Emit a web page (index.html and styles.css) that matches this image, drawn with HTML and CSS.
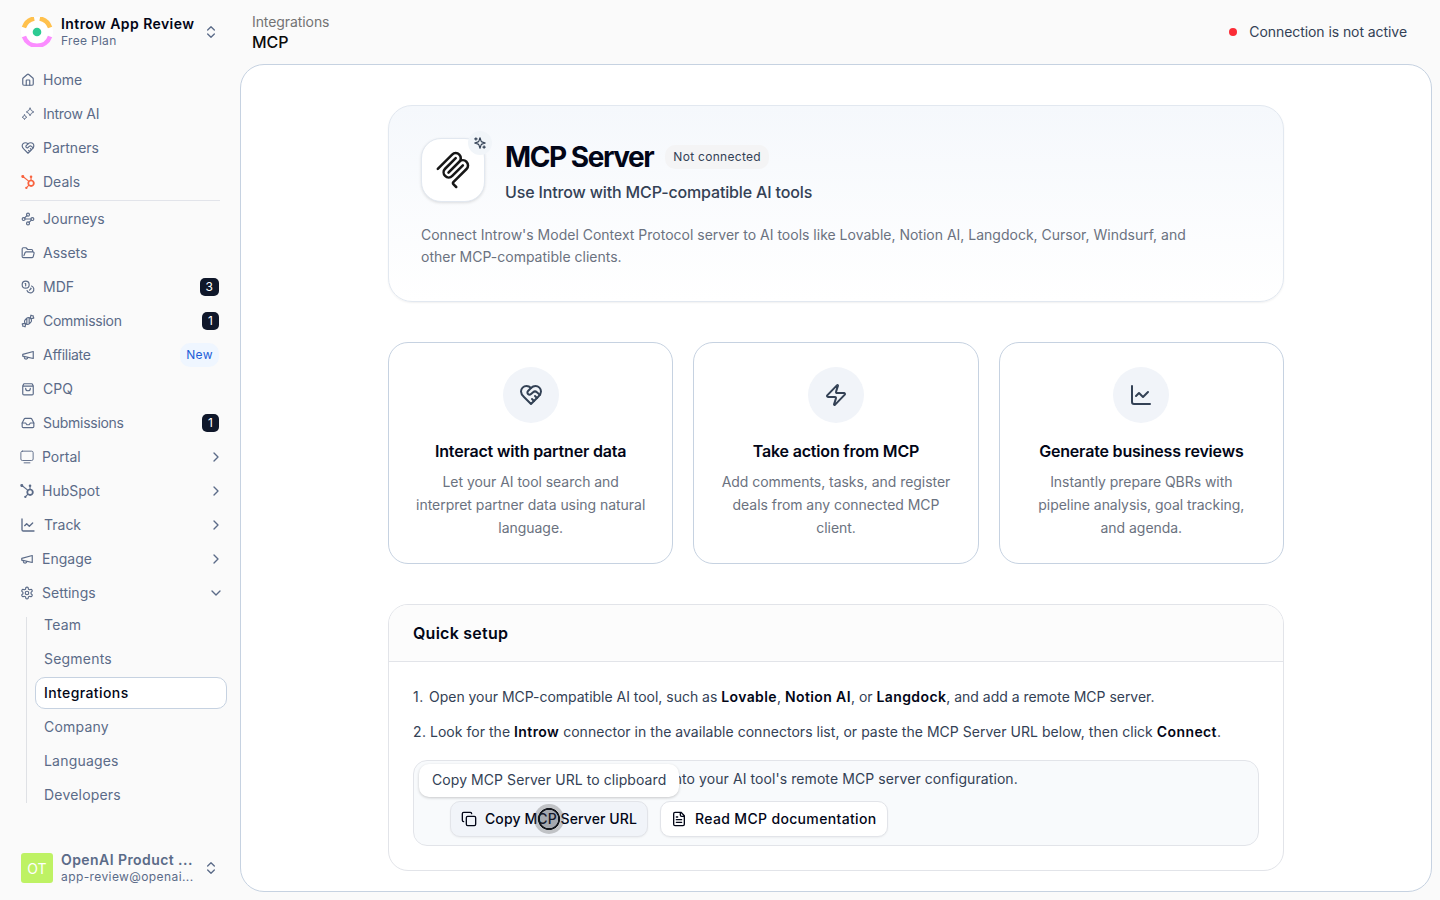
FILE: index.html
```html
<!DOCTYPE html>
<html lang="en">
<head>
    <meta charset="UTF-8">
    <title>MCP - Introw</title>
    <meta name="viewport" content="width=device-width, initial-scale=1.0">
    <link rel="stylesheet" href="styles.css">
</head>
<body>
    <svg class="sprite" aria-hidden="true">
        <symbol id="updown" viewBox="0 0 24 24"><path d="m7 15 5 5 5-5M7 9l5-5 5 5"/></symbol>
        <symbol id="chevron" viewBox="0 0 24 24"><path d="m9 18 6-6-6-6"/></symbol>
        <symbol id="home" viewBox="0 0 24 24"><path d="M15 21v-8a1 1 0 0 0-1-1h-4a1 1 0 0 0-1 1v8"/><path d="M3 10a2 2 0 0 1 .709-1.528l7-5.999a2 2 0 0 1 2.582 0l7 5.999A2 2 0 0 1 21 10v9a2 2 0 0 1-2 2H5a2 2 0 0 1-2-2z"/></symbol>
        <symbol id="ai" viewBox="0 0 24 24"><path d="M15.500 2q1 5 6.500 6.500-5.500 1.500-6.500 6.500-1-5-6.500-6.500 5.500-1.500 6.500-6.500ZM6 13.500q.8 3.200 4 4-3.200.8-4 4-.8-3.200-4-4 3.200-.8 4-4Z"/></symbol>
        <symbol id="handshake" viewBox="0 0 24 24"><path d="M19 14c1.490-1.460 3-3.210 3-5.500A5.500 5.500 0 0 0 16.500 3c-1.760 0-3 .5-4.500 2-1.500-1.500-2.740-2-4.500-2A5.500 5.500 0 0 0 2 8.500c0 2.300 1.500 4.050 3 5.500l7 7Z"/><path d="M12 5 9.040 7.960a2.170 2.170 0 0 0 0 3.080c.82.82 2.130.85 3 .07l2.070-1.900a2.820 2.820 0 0 1 3.790 0l2.960 2.660M18 15l-2-2M15 18l-2-2"/></symbol>
        <symbol id="hubspot" viewBox="0 0 24 24"><path fill="currentColor" stroke="none" d="M18.164 7.930V5.084a2.198 2.198 0 001.267-1.978v-.067A2.200 2.200 0 0017.238.845h-.067a2.200 2.200 0 00-2.193 2.193v.067a2.196 2.196 0 001.252 1.973l.013.006v2.852a6.220 6.220 0 00-2.969 1.310l.012-.01-7.828-6.095A2.497 2.497 0 104.300 4.656l-.012.006 7.697 5.991a6.176 6.176 0 00-1.038 3.446c0 1.343.425 2.588 1.147 3.607l-.013-.02-2.342 2.343a1.968 1.968 0 00-.58-.095h-.002a2.033 2.033 0 102.033 2.033 1.978 1.978 0 00-.1-.595l.005.014 2.317-2.317a6.247 6.247 0 104.782-11.134l-.036-.005zm-.964 9.378a3.206 3.206 0 113.215-3.207v.002a3.206 3.206 0 01-3.207 3.207z"/></symbol>
        <symbol id="journey" viewBox="0 0 24 24"><circle cx="12" cy="4.500" r="2.500"/><path d="m10.200 6.300-3.900 3.900"/><circle cx="4.500" cy="12" r="2.500"/><path d="M7 12h10"/><circle cx="19.500" cy="12" r="2.500"/><path d="m13.800 17.700 3.900-3.900"/><circle cx="12" cy="19.500" r="2.500"/></symbol>
        <symbol id="folder" viewBox="0 0 24 24"><path d="M2 7.500V18a2 2 0 0 0 2 2h15a2 2 0 0 0 2-1.600l1.400-6A2 2 0 0 0 20.500 10H9a2 2 0 0 0-1.900 1.300L5 16.500M2 8V5a2 2 0 0 1 2-2h4.500l3 3H18a2 2 0 0 1 2 2v2"/></symbol>
        <symbol id="coins" viewBox="0 0 24 24"><circle cx="8" cy="8" r="6"/><path d="M18.090 10.370A6 6 0 1 1 10.340 18M7 6h1v4M16.710 13.880l.7.710-2.820 2.820"/></symbol>
        <symbol id="candy" viewBox="0 0 24 24"><path d="m9.500 7.500-2 2a4.950 4.950 0 1 0 7 7l2-2a4.950 4.950 0 1 0-7-7ZM14 6.500v10M10 7.500v10"/><path d="m16 7 1-5 1.370.68A3 3 0 0 0 19.700 3H21v1.300c0 .46.100.92.320 1.330L22 7l-5 1M8 17l-1 5-1.370-.68A3 3 0 0 0 4.300 21H3v-1.300a3 3 0 0 0-.32-1.330L2 17l5-1"/></symbol>
        <symbol id="megaphone" viewBox="0 0 24 24"><path d="m3 11 18-5v12L3 14v-3zM11.600 16.800a3 3 0 1 1-5.800-1.600"/></symbol>
        <symbol id="bag" viewBox="0 0 24 24"><path d="M3 6.500 5 3h14l2 3.500V20a2 2 0 0 1-2 2H5a2 2 0 0 1-2-2ZM3 7h18M16 11a4 4 0 0 1-8 0"/></symbol>
        <symbol id="inbox" viewBox="0 0 24 24"><path d="M22 12h-6l-2 3h-4l-2-3H2"/><path d="M5.450 5.110 2 12v6a2 2 0 0 0 2 2h16a2 2 0 0 0 2-2v-6l-3.450-6.890A2 2 0 0 0 16.760 4H7.240a2 2 0 0 0-1.790 1.110z"/></symbol>
        <symbol id="monitor" viewBox="0 0 24 24"><rect x="1.500" y="2" width="21" height="16" rx="2.500"/><path d="M7 22h10"/></symbol>
        <symbol id="chart" viewBox="0 0 24 24"><path d="M3 3v16a2 2 0 0 0 2 2h16M19 9l-5 5-4-4-3 3"/></symbol>
        <symbol id="gear" viewBox="0 0 24 24"><path d="M12.220 2h-.44a2 2 0 0 0-2 2v.18a2 2 0 0 1-1 1.730l-.43.25a2 2 0 0 1-2 0l-.15-.08a2 2 0 0 0-2.730.73l-.22.38a2 2 0 0 0 .73 2.730l.15.100a2 2 0 0 1 1 1.720v.51a2 2 0 0 1-1 1.740l-.15.090a2 2 0 0 0-.73 2.730l.22.380a2 2 0 0 0 2.730.73l.15-.08a2 2 0 0 1 2 0l.43.250a2 2 0 0 1 1 1.730V20a2 2 0 0 0 2 2h.44a2 2 0 0 0 2-2v-.18a2 2 0 0 1 1-1.730l.43-.25a2 2 0 0 1 2 0l.15.080a2 2 0 0 0 2.730-.73l.22-.39a2 2 0 0 0-.73-2.730l-.15-.08a2 2 0 0 1-1-1.740v-.5a2 2 0 0 1 1-1.740l.15-.09a2 2 0 0 0 .73-2.730l-.22-.38a2 2 0 0 0-2.730-.73l-.15.080a2 2 0 0 1-2 0l-.43-.25a2 2 0 0 1-1-1.730V4a2 2 0 0 0-2-2z"/><circle cx="12" cy="12" r="3"/></symbol>
        <symbol id="sparkles" viewBox="0 0 24 24"><path d="m12 3-1.912 5.813a2 2 0 0 1-1.275 1.275L3 12l5.813 1.912a2 2 0 0 1 1.275 1.275L12 21l1.912-5.813a2 2 0 0 1 1.275-1.275L21 12l-5.813-1.912a2 2 0 0 1-1.275-1.275ZM5 3v4M19 17v4M3 5h4M17 19h4"/></symbol>
        <symbol id="mcp" viewBox="0 0 180 180"><path d="M18 84.853 85.882 16.971c9.373-9.373 24.569-9.373 33.941 0 9.373 9.372 9.373 24.568 0 33.941l-51.265 51.265M69.265 101.470l50.558-50.558c9.373-9.373 24.569-9.373 33.942 0l.353.353c9.373 9.373 9.373 24.569 0 33.941L92.725 146.600c-3.124 3.124-3.124 8.189 0 11.313l12.606 12.607M102.853 33.941 52.648 84.146c-9.372 9.372-9.372 24.568 0 33.941 9.373 9.372 24.569 9.372 33.941 0l50.205-50.205"/></symbol>
        <symbol id="zap" viewBox="0 0 24 24"><path d="M4 14a1 1 0 0 1-.78-1.630l9.900-10.200a.5.5 0 0 1 .86.460l-1.920 6.020A1 1 0 0 0 13 10h7a1 1 0 0 1 .78 1.630l-9.900 10.200a.5.5 0 0 1-.86-.46l1.920-6.020A1 1 0 0 0 11 14z"/></symbol>
        <symbol id="copy" viewBox="0 0 24 24"><rect x="8" y="8" width="14" height="14" rx="2"/><path d="M4 16c-1.100 0-2-.9-2-2V4c0-1.100.9-2 2-2h10c1.100 0 2 .9 2 2"/></symbol>
        <symbol id="file" viewBox="0 0 24 24"><path d="M15 2H6a2 2 0 0 0-2 2v16a2 2 0 0 0 2 2h12a2 2 0 0 0 2-2V7ZM14 2v4a2 2 0 0 0 2 2h4M10 9H8M16 13H8M16 17H8"/></symbol>
    </svg>

    <div class="layout">
        <aside class="sidebar">
            <div class="account workspace">
                <svg class="brand" viewBox="0 1 32 30">
                    <circle cx="16" cy="16" r="16" fill="#fff"/>
                    <g fill="none" stroke-width="4.500">
                        <path stroke="#ffc14d" d="M2.900 11.500A13.800 13.800 0 0 1 13.200 2.500M18.800 2.500A13.800 13.800 0 0 1 29.100 11.500"/>
                        <path stroke="#fb8dff" d="M2.950 20.500A13.800 13.800 0 0 0 29.050 20.500"/>
                    </g>
                    <circle cx="16" cy="16" r="4.300" fill="#2dcb93"/>
                </svg>
                <div class="account-text">
                    <div class="account-name">Introw App Review</div>
                    <div class="account-sub">Free Plan</div>
                </div>
                <svg class="icon updown"><use href="#updown"/></svg>
            </div>

            <nav class="nav">
                <a class="nav-item"><svg class="icon"><use href="#home"/></svg>Home</a>
                <a class="nav-item snug"><svg class="icon thin"><use href="#ai"/></svg>Introw AI</a>
                <a class="nav-item"><svg class="icon"><use href="#handshake"/></svg>Partners</a>
                <a class="nav-item"><svg class="icon orange"><use href="#hubspot"/></svg>Deals</a>
                <div class="divider"></div>
                <a class="nav-item"><svg class="icon"><use href="#journey"/></svg>Journeys</a>
                <a class="nav-item"><svg class="icon"><use href="#folder"/></svg>Assets</a>
                <a class="nav-item"><svg class="icon"><use href="#coins"/></svg>MDF<span class="count">3</span></a>
                <a class="nav-item snug"><svg class="icon"><use href="#candy"/></svg>Commission<span class="count">1</span></a>
                <a class="nav-item snug"><svg class="icon"><use href="#megaphone"/></svg>Affiliate<span class="new">New</span></a>
                <a class="nav-item"><svg class="icon"><use href="#bag"/></svg>CPQ</a>
                <a class="nav-item snug"><svg class="icon"><use href="#inbox"/></svg>Submissions<span class="count">1</span></a>
                <a class="nav-item group"><svg class="icon thin"><use href="#monitor"/></svg>Portal<svg class="icon arrow"><use href="#chevron"/></svg></a>
                <a class="nav-item group"><svg class="icon"><use href="#hubspot"/></svg>HubSpot<svg class="icon arrow"><use href="#chevron"/></svg></a>
                <a class="nav-item group"><svg class="icon wide"><use href="#chart"/></svg>Track<svg class="icon arrow"><use href="#chevron"/></svg></a>
                <a class="nav-item group"><svg class="icon"><use href="#megaphone"/></svg>Engage<svg class="icon arrow"><use href="#chevron"/></svg></a>
                <a class="nav-item group"><svg class="icon"><use href="#gear"/></svg>Settings<svg class="icon arrow open"><use href="#chevron"/></svg></a>
                <div class="subnav">
                    <a>Team</a>
                    <a>Segments</a>
                    <a class="active">Integrations</a>
                    <a>Company</a>
                    <a>Languages</a>
                    <a>Developers</a>
                </div>
            </nav>

            <div class="account user">
                <div class="avatar">OT</div>
                <div class="account-text">
                    <div class="account-name">OpenAI Product ...</div>
                    <div class="account-sub">app-review@openai...</div>
                </div>
                <svg class="icon updown"><use href="#updown"/></svg>
            </div>
        </aside>

        <main class="main">
            <header class="topbar">
                <div>
                    <div class="crumb">Integrations</div>
                    <div class="page-name">MCP</div>
                </div>
                <div class="status"><span class="dot"></span>Connection is not active</div>
            </header>

            <div class="panel">
                <section class="hero">
                    <div class="hero-top">
                        <div class="logo-box">
                            <svg class="mcp-logo"><use href="#mcp"/></svg>
                            <span class="logo-badge"><svg class="icon"><use href="#sparkles"/></svg></span>
                        </div>
                        <div>
                            <div class="title-row">
                                <h1>MCP Server</h1>
                                <span class="pill">Not connected</span>
                            </div>
                            <p class="subtitle">Use Introw with MCP-compatible AI tools</p>
                        </div>
                    </div>
                    <p class="description">Connect Introw's Model Context Protocol server to AI tools like Lovable, Notion AI, Langdock, Cursor, Windsurf, and other MCP-compatible clients.</p>
                </section>

                <section class="features">
                    <div class="feature">
                        <span class="feature-icon"><svg class="icon"><use href="#handshake"/></svg></span>
                        <h3>Interact with partner data</h3>
                        <p>Let your AI tool search and interpret partner data using natural language.</p>
                    </div>
                    <div class="feature">
                        <span class="feature-icon"><svg class="icon"><use href="#zap"/></svg></span>
                        <h3>Take action from MCP</h3>
                        <p>Add comments, tasks, and register deals from any connected MCP client.</p>
                    </div>
                    <div class="feature">
                        <span class="feature-icon"><svg class="icon"><use href="#chart"/></svg></span>
                        <h3>Generate business reviews</h3>
                        <p>Instantly prepare QBRs with pipeline analysis, goal tracking, and agenda.</p>
                    </div>
                </section>

                <section class="setup">
                    <h2>Quick setup</h2>
                    <div class="setup-body">
                        <p class="step"><span class="num">1.</span>Open your MCP-compatible AI tool, such as <b>Lovable</b>, <b>Notion AI</b>, or <b>Langdock</b>, and add a remote MCP server.</p>
                        <p class="step second"><span class="num">2.</span>Look for the <b>Introw</b> connector in the available connectors list, or paste the MCP Server URL below, then click <b>Connect</b>.</p>
                        <div class="callout">
                            <p>Then paste the MCP Server URL into your AI tool's remote MCP server configuration.</p>
                            <div class="actions">
                                <button class="btn copy hovered"><svg class="icon"><use href="#copy"/></svg>Copy MCP Server URL<span class="pointer"></span></button>
                                <button class="btn docs"><svg class="icon"><use href="#file"/></svg>Read MCP documentation</button>
                            </div>
                            <div class="tooltip">Copy MCP Server URL to clipboard</div>
                        </div>
                    </div>
                </section>
            </div>
        </main>
    </div>
</body>
</html>
```
FILE: styles.css
```css
* {
    margin: 0;
    padding: 0;
    box-sizing: border-box;
}

body {
    font-family: Inter, sans-serif;
    font-size: 14px;
    color: #334155;
    background-color: #fafafa;
    overflow: hidden;
}

.sprite {
    display: none;
}

.icon {
    width: 14px;
    height: 14px;
    flex-shrink: 0;
    fill: none;
    stroke: currentColor;
    stroke-width: 2;
    stroke-linecap: round;
    stroke-linejoin: round;
}

.thin {
    stroke-width: 1.6;
}

.layout {
    display: flex;
    height: 100vh;
}

/* sidebar */
.sidebar {
    width: 240px;
    display: flex;
    flex-direction: column;
    color: #5b6b88;
}

.account {
    height: 64px;
    display: flex;
    align-items: center;
    padding: 0 21px;
}

.account-text {
    width: 134px;
    margin: 0 8px 1px;
    white-space: nowrap;
}

.account-name {
    font-weight: 600;
    line-height: 18px;
    letter-spacing: 0.43px;
}

.workspace .account-name {
    color: #020617;
}

.account-sub {
    font-size: 12px;
    line-height: 16px;
    letter-spacing: 0.3px;
}

.user .account-sub {
    letter-spacing: 0.4px;
}

.updown {
    width: 16px;
    height: 16px;
}

.brand {
    width: 32px;
    height: 30px;
}

.avatar {
    width: 32px;
    height: 30px;
    border-radius: 3px;
    background-color: #bef264;
    color: white;
    display: flex;
    align-items: center;
    justify-content: center;
}

.user {
    margin-top: auto;
}

.nav {
    padding-top: 1px;
}

.nav-item {
    height: 30px;
    margin-bottom: 4px;
    padding: 0 21px 1px;
    display: flex;
    align-items: center;
    gap: 8px;
}

.nav-item .icon {
    margin-top: 1px;
}

.nav-item .arrow {
    width: 16px;
    height: 16px;
    margin-left: auto;
}

.snug {
    letter-spacing: -0.27px;
}

.group {
    padding: 0 16px 1px 20px;
}

.wide {
    width: 16px;
    height: 16px;
}

.orange {
    color: #f8623e;
}

.divider {
    height: 1px;
    background-color: #e2e4ea;
    margin: -1px 20px 3px;
}

.open {
    transform: rotate(90deg);
}

.count {
    margin: 1px 0 0 auto;
    height: 18px;
    padding: 0 6px;
    border-radius: 5px;
    background-color: #0f172a;
    color: white;
    font-size: 12px;
    line-height: 18px;
    letter-spacing: 0;
}

.new {
    margin: 1px 0 0 auto;
    height: 24px;
    padding: 0 6px;
    border-radius: 10px;
    background-color: #eff6ff;
    color: #1d5ed8;
    font-size: 12px;
    line-height: 24px;
    letter-spacing: 0.4px;
}

.subnav {
    display: flex;
    flex-direction: column;
    gap: 2px;
    margin-left: 26px;
    margin-top: 9px;
    height: 186px;
    border-left: 1px solid #dfe1e5;
    padding: 0 13px 0 8px;
}

.subnav a {
    flex: 0 0 32px;
    padding-left: 9px;
    line-height: 32px;
    letter-spacing: 0.2px;
}

.subnav a:first-child {
    margin-top: -8px;
}

.subnav .active {
    background-color: white;
    border: 1px solid #c6d2e1;
    border-radius: 10px;
    padding-left: 8px;
    line-height: 30px;
    letter-spacing: 0.4px;
    font-weight: 500;
    color: #020617;
}

/* main */
.main {
    width: 1192px;
    display: flex;
    flex-direction: column;
}

.topbar {
    height: 64px;
    flex-shrink: 0;
    display: flex;
    align-items: center;
    justify-content: space-between;
    padding: 0 25px 0 12px;
}

.crumb {
    line-height: 20px;
    letter-spacing: -0.08px;
    color: #737373;
}

.page-name {
    font-size: 16px;
    font-weight: 500;
    line-height: 20px;
    color: #0a0a0a;
}

.status {
    display: flex;
    align-items: center;
    gap: 12px;
    padding-bottom: 1px;
    letter-spacing: -0.07px;
}

.dot {
    width: 8px;
    height: 8px;
    margin-top: 1px;
    border-radius: 50%;
    background-color: #fb2c36;
}

.panel {
    height: 828px;
    background-color: white;
    border: 1px solid #c6d2e1;
    border-radius: 24px;
    padding: 40px 147px 0;
}

.hero {
    height: 197px;
    border: 1px solid #e2e8f0;
    border-radius: 24px;
    padding: 32px;
    background: linear-gradient(#f5f8fc, #fff);
    box-shadow: 0 1px 2px rgba(0, 0, 0, 0.06);
}

.hero-top {
    display: flex;
    gap: 20px;
}

.logo-box {
    position: relative;
    width: 64px;
    height: 64px;
    border: 1px solid #e2e8f0;
    border-radius: 20px;
    background-color: white;
    box-shadow: 0 1px 3px rgba(0, 0, 0, 0.12);
    display: flex;
    align-items: center;
    justify-content: center;
}

.mcp-logo {
    width: 38px;
    height: 38px;
    fill: none;
    stroke: #171717;
    stroke-width: 12;
    stroke-linecap: round;
}

.logo-badge {
    position: absolute;
    top: -8px;
    right: -8px;
    width: 24px;
    height: 24px;
    border-radius: 50%;
    background-color: #f1f5f9;
    display: flex;
    align-items: center;
    justify-content: center;
}

.title-row {
    display: flex;
    align-items: center;
    gap: 12px;
    height: 38px;
}

h1 {
    font-size: 28px;
    font-weight: 700;
    letter-spacing: -1.45px;
    color: #020617;
}

.pill {
    height: 24px;
    line-height: 24px;
    padding: 0 8px;
    border-radius: 10px;
    background-color: #f4f4f5;
    font-size: 12px;
    letter-spacing: 0.3px;
}

.subtitle {
    margin-top: 4px;
    font-size: 16px;
    line-height: 24px;
    font-weight: 500;
    letter-spacing: -0.15px;
}

.description {
    margin-top: 20px;
    width: 770px;
    line-height: 22px;
    color: #6b7280;
}

.features {
    margin-top: 40px;
    display: grid;
    grid-template-columns: repeat(3, 1fr);
    gap: 20px;
}

.feature {
    height: 222px;
    border: 1px solid #c6d2e1;
    border-radius: 20px;
    padding: 24px 26px;
    text-align: center;
}

.feature-icon {
    width: 56px;
    height: 56px;
    margin: 0 auto;
    border-radius: 50%;
    background-color: #f1f4f9;
    display: flex;
    align-items: center;
    justify-content: center;
}

.feature-icon .icon {
    width: 24px;
    height: 24px;
}

h3 {
    margin-top: 16px;
    font-size: 16px;
    font-weight: 600;
    line-height: 24px;
    letter-spacing: -0.18px;
    color: #020617;
}

.feature p {
    margin-top: 7px;
    line-height: 23px;
    letter-spacing: -0.04px;
    color: #6b7280;
}

.setup {
    margin-top: 40px;
    height: 267px;
    border: 1px solid #e2e4e9;
    border-radius: 20px;
    overflow: hidden;
}

h2 {
    height: 57px;
    padding-left: 24px;
    border-bottom: 1px solid #e2e4e9;
    background-color: #fcfcfc;
    font-size: 16px;
    font-weight: 600;
    line-height: 56px;
    letter-spacing: 0.25px;
    color: #020617;
}

.setup-body {
    padding: 23px 24px;
}

.step {
    line-height: 23px;
    margin-bottom: 12px;
    letter-spacing: -0.02px;
}

.second {
    letter-spacing: 0.03px;
}

.num {
    display: inline-block;
    width: 16px;
    letter-spacing: 0.5px;
}

.second .num {
    width: 17px;
}

.step b {
    font-weight: 600;
    letter-spacing: 0.4px;
    color: #020617;
}

.callout {
    position: relative;
    height: 86px;
    margin-top: 17px;
    padding: 6px 36px;
    border: 1px solid #e2e4e9;
    border-radius: 14px;
    background-color: #f8fafc;
}

.callout p {
    line-height: 23px;
    letter-spacing: 0.08px;
}

.actions {
    display: flex;
    gap: 12px;
    margin-top: 11px;
}

.btn {
    position: relative;
    height: 36px;
    display: flex;
    align-items: center;
    gap: 8px;
    padding: 0 0 1px 10px;
    border: 1px solid #e2e4e9;
    border-radius: 10px;
    background-color: white;
    box-shadow: 0 1px 2px rgba(0, 0, 0, 0.05);
    font: 500 14px Inter, sans-serif;
    white-space: nowrap;
    color: #020617;
}

.btn .icon {
    width: 16px;
    height: 16px;
    margin-top: 1px;
}

.copy {
    width: 198px;
    letter-spacing: 0.1px;
}

.docs {
    width: 228px;
    letter-spacing: 0.34px;
}

.btn.hovered {
    background-color: #f1f4f9;
}

.pointer {
    position: absolute;
    left: 83px;
    top: 2px;
    width: 30px;
    height: 30px;
    border-radius: 50%;
    background: radial-gradient(circle, rgba(50, 55, 65, 0.4) 9px, #15181e 9.500px 10.700px, rgba(80, 80, 80, 0.3) 11.300px);
}

.tooltip {
    position: absolute;
    left: 5px;
    top: 3px;
    width: 260px;
    height: 33px;
    padding: 0 13px;
    border-radius: 10px;
    background-color: white;
    box-shadow: 0 1px 3px rgba(0, 0, 0, 0.2);
    line-height: 31px;
    letter-spacing: 0.07px;
    white-space: nowrap;
}
```
